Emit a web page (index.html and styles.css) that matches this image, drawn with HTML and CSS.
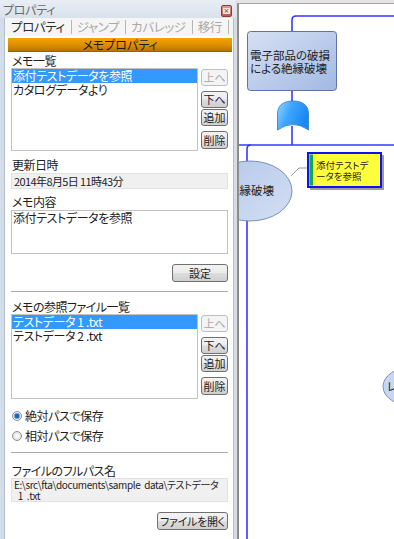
FILE: index.html
```html
<!DOCTYPE html>
<html lang="ja">
<head>
<meta charset="utf-8">
<title>プロパティ</title>
<link rel="stylesheet" href="styles.css">
</head>
<body>
<div class="app">
  <aside class="panel">
    <div class="titlebar">
      <span class="title">プロパティ</span>
      <span class="close"><span class="close-x">×</span></span>
    </div>
    <div class="inner">
      <div class="tabs">
        <span class="tab active">プロパティ</span>
        <span class="tab">ジャンプ</span>
        <span class="tab">カバレッジ</span>
        <span class="tab">移行</span>
      </div>
      <div class="content">
        <div class="header">メモプロパティ</div>
        <div class="form">
          <div class="label first">メモ一覧</div>
          <div class="listrow">
            <ul class="list">
              <li class="sel">添付テストデータを参照</li>
              <li>カタログデータより</li>
            </ul>
            <div class="btncol">
              <button class="btn" disabled>上へ</button>
              <button class="btn down">下へ</button>
              <button class="btn add">追加</button>
              <button class="btn del">削除</button>
            </div>
          </div>

          <div class="label gap8">更新日時</div>
          <div class="field date">2014年8月5日 11時43分</div>

          <div class="label gap7">メモ内容</div>
          <div class="textarea">添付テストデータを参照</div>

          <div class="actions a10"><button class="btn set">設定</button></div>

          <div class="sep s9"></div>

          <div class="label gap8">メモの参照ファイル一覧</div>
          <div class="listrow list2">
            <ul class="list">
              <li class="sel">テストデータ 1 .txt</li>
              <li>テストデータ 2 .txt</li>
            </ul>
            <div class="btncol">
              <button class="btn" disabled>上へ</button>
              <button class="btn down">下へ</button>
              <button class="btn add">追加</button>
              <button class="btn del">削除</button>
            </div>
          </div>

          <label class="radio r1"><span class="dot on"></span><span>絶対パスで保存</span></label>
          <label class="radio r2"><span class="dot"></span><span>相対パスで保存</span></label>

          <div class="sep s11"></div>

          <div class="label gap11">ファイルのフルパス名</div>
          <div class="field path">E:\src\fta\documents\sample data\テストデータ<br>&nbsp;1 .txt</div>

          <div class="actions a10"><button class="btn open">ファイルを開く</button></div>
        </div>
      </div>
    </div>
  </aside>
  <div class="splitter"></div>
  <main class="canvas">
    <svg class="diagram" viewBox="239 4 155 535" width="155" height="535">
      <defs>
        <linearGradient id="boxg" x1="0" y1="0" x2="1" y2="1">
          <stop offset="0" stop-color="#d6e0f3"/>
          <stop offset="1" stop-color="#a2b9e4"/>
        </linearGradient>
        <linearGradient id="gateg" x1="0" y1="0" x2="1" y2="0.4">
          <stop offset="0" stop-color="#9ad6ff"/>
          <stop offset="0.45" stop-color="#3ea6ff"/>
          <stop offset="1" stop-color="#1a88f2"/>
        </linearGradient>
        <linearGradient id="ellg" x1="0" y1="0" x2="1" y2="1">
          <stop offset="0" stop-color="#b4c7ea"/>
          <stop offset="1" stop-color="#d3def2"/>
        </linearGradient>
      </defs>
      <g fill="none" stroke="#3838ff" stroke-width="1.6">
        <path d="M292 31 V20 Q292 16 296 16 H394"/>
        <path d="M292 91 V102"/>
        <path d="M292 126 V145"/>
        <path d="M239 145 H394"/>
        <path d="M251 145 Q247 145 247 149 V539"/>
      </g>
      <rect x="247.5" y="31.5" width="89" height="59" rx="3" fill="url(#boxg)" stroke="#5c74a6" stroke-width="1"/>
      <text class="dtext" x="250" y="59.5">電子部品の破損</text>
      <text class="dtext" x="250" y="72.5">による絶縁破壊</text>
      <path d="M277.5 130 V114 C277.5 104 285 101 293 101 C301 101 308.5 104 308.5 114 V130 Q293 119 277.5 130 Z" fill="url(#gateg)" stroke="#2f78c8" stroke-width="0.8"/>
      <ellipse cx="250" cy="191" rx="42" ry="30" fill="url(#ellg)" stroke="#7b90bd" stroke-width="1"/>
      <text class="dtext" x="251" y="195" text-anchor="middle">絶縁破壊</text>
      <polyline points="291,176 299,168 307,168" fill="none" stroke="#9a9a9a" stroke-width="1"/>
      <rect x="310" y="155" width="74" height="35" fill="#9c9c9c"/>
      <rect x="308" y="153" width="73" height="34" fill="#ffff3c" stroke="#1010ff" stroke-width="2"/>
      <rect x="309.5" y="154.5" width="3.5" height="31" fill="#12a84a"/>
      <text class="ntext" x="316" y="168.5">添付テストデ</text>
      <text class="ntext" x="316" y="179.5">ータを参照</text>
      <ellipse cx="412" cy="386.5" rx="29" ry="19.5" fill="#c9d6ef" stroke="#7b90bd" stroke-width="1"/>
      <text class="dtext" x="387" y="391">レ</text>
    </svg>
  </main>
</div>
</body>
</html>
```
FILE: styles.css
```css
* { box-sizing: border-box; }
html, body { margin: 0; padding: 0; }
body {
  width: 394px;
  height: 539px;
  overflow: hidden;
  background: #e4e4e4;
  font-family: "Noto Sans CJK JP", "Noto Sans", sans-serif;
  font-size: 12px;
  font-feature-settings: "palt";
  color: #1e1e1e;
}
.app { display: flex; height: 539px; }

/* left property panel */
.panel {
  width: 236px;
  flex: none;
  display: flex;
  flex-direction: column;
  background: #d3dce9;
}
.titlebar {
  height: 18px;
  flex: none;
  display: flex;
  align-items: center;
  justify-content: space-between;
  padding: 0 4px 0 3px;
  background: linear-gradient(#e9eef5, #d9e1ec);
  color: #6a6a6a;
  line-height: 18px;
}
.title { letter-spacing: -0.3px; margin-top: 2px; }
.close {
  width: 11px;
  height: 12px;
  margin-top: 4px;
  border: 1px solid #8f3b30;
  border-radius: 2px;
  background: linear-gradient(#e49a8e, #c2554a);
  display: flex;
  align-items: center;
  justify-content: center;
}
.close-x {
  display: block;
  width: 7px;
  height: 6px;
  background: #f1e7e6;
  color: #7a2e25;
  font-family: "DejaVu Sans", sans-serif;
  font-size: 7px;
  line-height: 6px;
  text-align: center;
}
.inner {
  flex: 1;
  display: flex;
  flex-direction: column;
  margin: 0 2px 0 4px;
  border-left: 1px solid #b4bfcd;
  border-right: 1px solid #b4bfcd;
  background: #fff;
}
.tabs {
  height: 18px;
  flex: none;
  display: flex;
  align-items: center;
  padding-left: 6px;
  background: #f5f5f5;
}
.tab {
  padding: 0 6px 0 5px;
  border-right: 1px solid #b5b5b5;
  line-height: 14px;
  font-size: 12.5px;
  color: #a9a9a9;
  letter-spacing: -0.4px;
}
.tab.active { padding-left: 0; color: #2e2e2e; }

.content { flex: 1; padding: 2px 0 0 3px; }
.header {
  height: 14px;
  margin-right: 1px;
  background: linear-gradient(#f6a400, #dc8e00 55%, #b87400);
  border-bottom: 1px solid #9d6200;
  text-align: center;
  line-height: 14px;
  color: #1c1c1c;
}
.form { padding: 0 5px 0 3px; }

.label {
  height: 12px;
  line-height: 12px;
  padding-left: 1px;
  letter-spacing: -0.5px;
}
.label.first { margin-top: 3px; }
.label.gap7 { margin-top: 7px; }
.label.gap8 { margin-top: 8px; }
.label.gap11 { margin-top: 11px; }

.listrow { display: flex; margin-top: 1px; height: 83px; }
.listrow.list2 { margin-top: 1px; height: 85px; }
.list {
  flex: 1;
  margin: 0;
  padding: 0;
  list-style: none;
  border: 1px solid #c3c3c3;
}
.list li {
  height: 14px;
  line-height: 14px;
  padding-left: 1px;
  white-space: nowrap;
  letter-spacing: -0.4px;
}
.list li.sel { background: #3399ff; color: #fff; }

.btncol {
  width: 27px;
  flex: none;
  margin-left: 3px;
  display: flex;
  flex-direction: column;
  padding-top: 1px;
}
.btn {
  height: 17px;
  padding: 0;
  border: 1px solid #707070;
  border-radius: 3px;
  background: linear-gradient(#f3f3f3, #ebebeb 48%, #dddddd 52%, #cfcfcf);
  font-family: inherit;
  font-size: 11px;
  line-height: 15px;
  color: #1e1e1e;
  font-feature-settings: "palt";
}
.btn:disabled {
  border-color: #bcbfc2;
  background: #f4f4f4;
  color: #a8a8a8;
}
.btn.down { margin-top: 5px; }
.btn.add { margin-top: 1px; }
.btn.del { margin-top: 5px; height: 18px; }

.field {
  margin-top: 2px;
  background: #f0f0f0;
  border: 1px solid #e2e2e2;
  padding-left: 2px;
}
.field.date {
  height: 16px;
  font-size: 11px;
  line-height: 14px;
  letter-spacing: -0.6px;
}
.field.path {
  margin-top: 1px;
  height: 24px;
  font-size: 10px;
  line-height: 11px;
  letter-spacing: -0.4px;
  word-spacing: 2px;
  padding-top: 0;
}
.textarea {
  margin-top: 2px;
  height: 44px;
  border: 1px solid #c3c3c3;
  padding: 0 1px;
  line-height: 14px;
  letter-spacing: -0.4px;
}
.actions { display: flex; justify-content: flex-end; }
.actions.a10 { margin-top: 10px; }
.btn.set { width: 56px; height: 18px; }
.btn.open { width: 71px; height: 18px; letter-spacing: -0.3px; }

.sep { height: 2px; border-top: 1px solid #ababab; border-bottom: 1px solid #ffffff; }
.sep.s9 { margin-top: 9px; }
.sep.s11 { margin-top: 10px; }

.radio {
  display: flex;
  align-items: center;
  gap: 3px;
  height: 13px;
  padding-left: 1px;
  letter-spacing: -0.4px;
}
.radio.r1 { margin-top: 10px; }
.radio.r2 { margin-top: 7px; }
.dot {
  width: 10px;
  height: 10px;
  border-radius: 50%;
  border: 1px solid #8e8f8f;
  background: radial-gradient(circle, #ffffff, #d8d8d8);
}
.dot.on {
  background: radial-gradient(circle, #1f64b4 0 2px, #7fb2e6 2.6px 3px, #eeeeee 3.5px);
}

/* splitter + canvas */
.splitter { width: 1px; flex: none; background: #dcdcdc; }
.canvas {
  flex: 1;
  margin-top: 3px;
  border-top: 1px solid #a3a3a3;
  border-left: 2px solid #8d8d8d;
  background: #ffffff;
  overflow: hidden;
}
.diagram { display: block; }
.dtext {
  font-family: "Noto Sans CJK JP", sans-serif;
  font-size: 11.5px;
  fill: #222;
}
.ntext {
  font-family: "Noto Sans CJK JP", sans-serif;
  font-size: 9.5px;
  fill: #222;
}
```
